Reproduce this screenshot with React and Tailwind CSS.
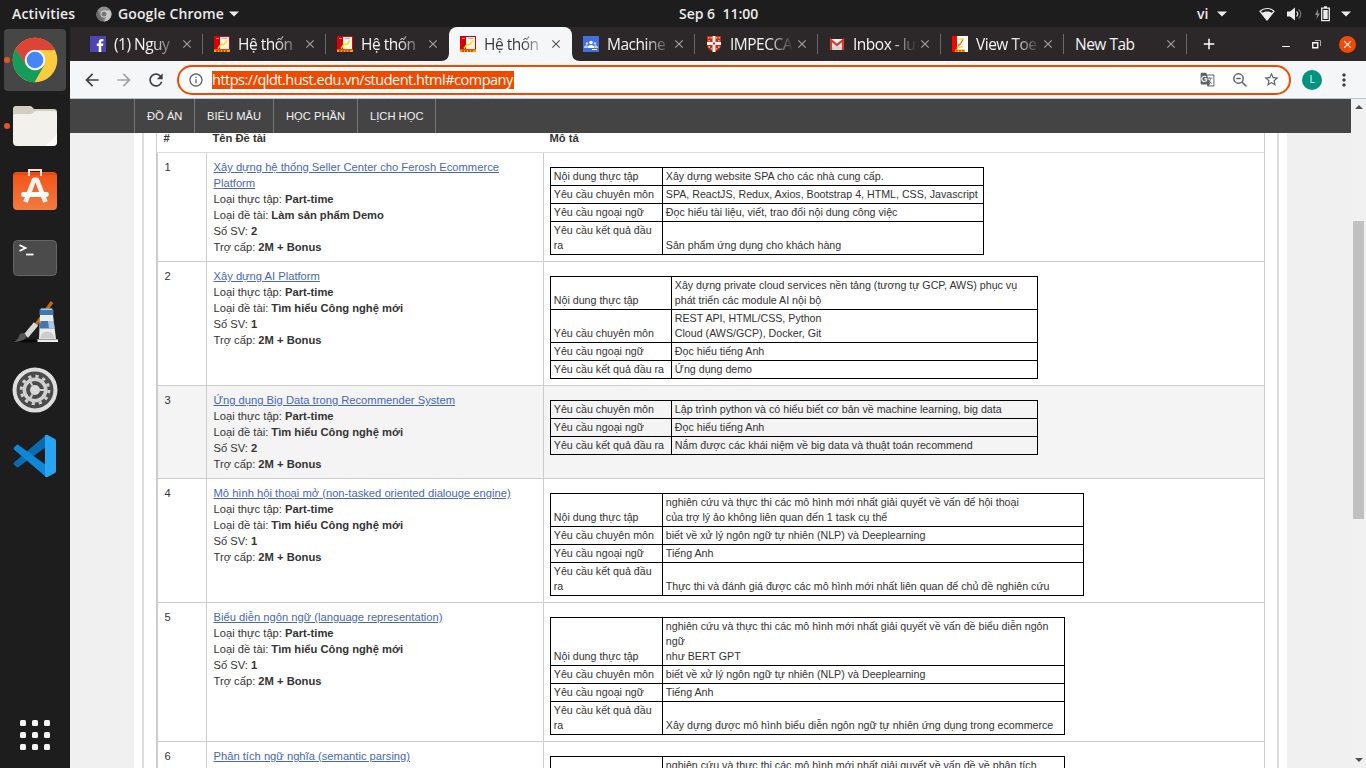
import React from "react";
import { MdArrowBack, MdArrowForward, MdRefresh, MdInfoOutline, MdGTranslate, MdStarBorder, MdClose, MdAdd, MdMoreVert } from "react-icons/md";

const UI = "font-['Open_Sans','Noto_Sans',sans-serif]";

const Hust = () => (
  <svg width="16" height="16" viewBox="0 0 16 16">
    <path fill="#d8000a" d="M0 0h16v16H0z" />
    <path fill="#fff6ee" d="M6 1h9v12H6z" />
    <path fill="#f0a400" d="M0 13.5h16V16H0z" />
    <path d="M4 12.500 7 8.500h3l3-4" stroke="#f2e400" strokeWidth="1.400" fill="none" />
    <path d="M2 2.500h3" stroke="#f0a000" />
    <path d="M8 2.500h5" stroke="#f2a0a0" />
    <path d="M2 15h12" stroke="#c8000a" strokeDasharray="2 1" />
  </svg>
);
const Facebook = () => (
  <svg width="16" height="16" viewBox="0 0 16 16">
    <path fill="#4c46b2" d="M0 0h16v16H0z" />
    <path fill="#fff" d="M8.700 16V10H6.800V7.600h1.900V6c0-2 1.200-3 3-3h1.700v2.300h-1.100c-.9 0-1.100.4-1.100 1.100v1.200h2.200L13 10h-1.800v6z" />
  </svg>
);
const Classroom = () => (
  <svg width="16" height="16" viewBox="0 0 16 16">
    <path fill="#4470dc" d="M0 0h16v16H0z" />
    <g fill="#c2d2f6"><circle cx="4" cy="7.500" r="1.300" /><circle cx="12" cy="7.500" r="1.300" /><path d="M1 12c0-3 3-3.500 4-2l-1 2zM15 12c0-3-3-3.500-4-2l1 2z" /></g>
    <g fill="#fff"><circle cx="8" cy="6.500" r="1.800" /><path d="M4.500 12c0-4 7-4 7 0z" /><path d="M9 13h5v1H9z" /></g>
  </svg>
);
const Crest = () => (
  <svg width="16" height="16" viewBox="0 0 16 16">
    <path fill="#c9281e" d="M1 0h14v9c0 4-4 6-7 7-3-1-7-3-7-7z" />
    <path fill="#e9b33c" d="M2 1h1.500v1.500H2zM4.500 1H6v1.500H4.500zM10 1h1.500v1.500H10zM12.500 1H14v1.500h-1.500zM2.500 4H4v1.500H2.500zM12 4h1.500v1.500H12zM2.500 10H4v2H2.500zM12 10h1.500v2H12zM4.800 12H6v1.500H4.800zM10 12h1.200v1.500H10z" />
    <path d="M8 0v16M1 7.500h14" stroke="#f4f4f4" strokeWidth="3" />
    <path fill="#c9281e" d="M7 6.500h2v2H7z" />
  </svg>
);
const Gmail = () => (
  <svg width="16" height="16" viewBox="0 0 16 16">
    <path fill="#f0f0f0" d="M1 3h14v11H1z" />
    <path fill="#d6d6d6" d="m5 9 3 2 3-2 3 5H2z" />
    <path d="M2 14V4l6 5 6-5v10" stroke="#d9372b" strokeWidth="2.200" fill="none" />
  </svg>
);
const ViewToeic = () => (
  <svg width="16" height="16" viewBox="0 0 16 16">
    <path fill="#fff" d="M0 0h16v16H0z" />
    <path fill="#f00" d="M0 0h5v16H0z" />
    <path fill="#f4c400" d="M3 13.500h10V16H3z" />
    <path d="M5 12 11 3M6 3h6M5 11h6" stroke="#e8c800" strokeWidth="1.200" fill="none" />
    <path d="M6 9h2l3-5" stroke="#e23020" fill="none" strokeWidth=".8" />
    <path d="M4 14.800h8" stroke="#f00" strokeDasharray="2 1" />
  </svg>
);

const tabs = [
  { t: "(1) Nguy", I: Facebook },
  { t: "Hệ thốn", I: Hust },
  { t: "Hệ thốn", I: Hust, noSep: true },
  { t: "Hệ thốn", I: Hust, active: true },
  { t: "Machine", I: Classroom },
  { t: "IMPECCA", I: Crest },
  { t: "Inbox - lu", I: Gmail },
  { t: "View Toe", I: ViewToeic },
  { t: "New Tab" },
];

function Tab({ t, I, active, noSep, first }) {
  const mask = I ? "[mask-image:linear-gradient(to_right,#000_38px,transparent_64px)]" : "";
  return (
    <div className={"relative flex h-[34px] w-[123px] shrink-0 items-center pl-[11px] " + (active ? "rounded-t-[8px] bg-[#f5f6f8] text-[#3b3b3b]" : "text-[#f4f4f4]")}>
      {active && (
        <svg className="absolute -left-[8px] bottom-0" width="139" height="8" viewBox="0 0 139 8">
          <path fill="#f5f6f8" d="M0 8C5 8 8 5 8 0v8zM139 8c-5 0-8-3-8-8v8z" />
        </svg>
      )}
      {I && <div className={"h-4 w-4 shrink-0 " + (first ? "-ml-px mr-[8px]" : "mr-[8px]")}><I /></div>}
      <div className={"whitespace-nowrap text-[15.5px] leading-[24px] tracking-[-0.5px] " + (I ? "w-[64px] " : "w-[88px] ") + mask}>{t}</div>
      <MdClose className={"h-[14px] w-[14px] shrink-0 " + (first ? "ml-[2px] " : "ml-px ") + (active ? "text-[#555]" : "text-[#a0a0a0]")} />
      {!active && !noSep && <div className="ml-auto h-[20px] w-px bg-[#6a6a6a]" />}
    </div>
  );
}

const Down = ({ className }) => (
  <svg className={className} width="10" height="6" viewBox="0 0 10 6"><path fill="#ececec" d="M0 .5h10L5 5.500z" /></svg>
);

function TopBar() {
  return (
    <div className={"flex h-[27px] shrink-0 items-center bg-[#1d1d1d] text-[14px] font-semibold leading-[26px] text-[#ececec] " + UI}>
      <div className="w-[96px] whitespace-nowrap pl-3 tracking-[0.2px]">Activities</div>
      <svg width="16" height="16" viewBox="0 0 16 16">
        <circle cx="8" cy="8" r="7.500" fill="#8d8d8d" /><path fill="#c6c6c6" d="M8 4.500h6.600A7.500 7.500 0 0 1 8 15.500L11 10z" /><path fill="#6d6d6d" d="M1.500 4.200 5 10l3 2-1.500 3.500C0 14-1 8 1.500 4.200z" />
        <circle cx="8" cy="8" r="3.500" fill="#ddd" /><circle cx="8" cy="8" r="2.600" fill="#777" />
      </svg>
      <div className="ml-[6px] w-[108px] whitespace-nowrap tracking-[0.12px]">Google Chrome</div>
      <Down className="ml-[3px]" />
      <div className="ml-[440px] w-[81px] whitespace-pre">Sep 6  11:00</div>
      <div className="ml-[437px] w-[12px]">vi</div>
      <Down className="ml-[8px]" />
      <svg className="ml-[32px]" width="16" height="14" viewBox="0 0 16 14"><path fill="#ececec" d="M8 13.500 2.500 6.300C5.500 4 10.500 4 13.500 6.300z" /><path d="M1 4.200C5 .6 11 .6 15 4.200L8 13z" stroke="#ececec" strokeWidth="1.200" fill="none" /></svg>
      <svg className="ml-[12px]" width="16" height="14" viewBox="0 0 16 14"><path fill="#ececec" d="M0 4.500h3L8 .5v13L3 9.500H0z" /><path d="M9.500 4.500c1.500 1.500 1.500 3.500 0 5" stroke="#ddd" fill="none" strokeWidth="1.200" /><path d="M11.500 2.500c3 2.500 3 6.500 0 9" stroke="#777" fill="none" strokeWidth="1.200" /></svg>
      <svg className="ml-[12px]" width="16" height="16" viewBox="0 0 16 16"><path fill="#888" d="M3 3 0 9h2l-.5 4L5 7.500H3z" /><path d="M6.700 2.200h7.600v12.500H6.700zM9 .8h3" stroke="#ececec" strokeWidth="1.300" fill="none" /><path fill="#ececec" d="M8.300 4h4.400v9H8.300z" /></svg>
      <Down className="ml-[10px]" />
    </div>
  );
}

function Dock() {
  const cell = "relative flex h-[66px] w-[70px] shrink-0 items-center justify-center";
  return (
    <div className="flex w-[70px] shrink-0 flex-col bg-[#1d1d1d]">
      <div className={cell}>
        <div className="flex h-[62px] w-[62px] items-center justify-center rounded-[4px] bg-[#464646]">
          <svg width="46" height="46" viewBox="0 0 46 46">
            <circle cx="23" cy="23" r="22.300" fill="#fccb3f" />
            <path fill="#dc4437" d="M3.500 12A22.300 22.300 0 0 1 43 13H23L13.500 28z" />
            <path fill="#149c58" d="M3.700 12A22.300 22.300 0 0 0 22.500 45.300L32 28.500 23 33l-9-5z" />
            <circle cx="23" cy="23" r="10.300" fill="#f3f3f3" /><circle cx="23" cy="23" r="8.300" fill="#4387f6" />
          </svg>
        </div>
        <div className="absolute left-[4px] top-[30px] h-[6px] w-[6px] rounded-full bg-[#e95420]" />
      </div>
      <div className={cell}>
        <svg width="46" height="44" viewBox="0 0 46 44">
          <path fill="#d3cfc0" d="M1 5q0-3 3-3h14q2 0 3 2l1 1h20q3 0 3 3v8H1z" />
          <path fill="#f3f1ec" d="M1 12q0-2 3-2h14q2 0 4-2 1-1 3-1h17q3 0 3 3v28q0 4-4 4H5q-4 0-4-4z" />
          <path fill="#fff" opacity=".8" d="M45 30v8q0 4-4 4h-7z" />
        </svg>
        <div className="absolute left-[4px] top-[30px] h-[6px] w-[6px] rounded-full bg-[#e95420]" />
      </div>
      <div className={cell}>
        <svg className="-mt-[4px]" width="46" height="44" viewBox="0 0 46 44">
          <defs><linearGradient id="sw" x2="0" y2="1"><stop stopColor="#f35217" /><stop offset="1" stopColor="#f17c41" /></linearGradient></defs>
          <rect x="1" y="4" width="44" height="38" rx="4" fill="url(#sw)" />
          <path d="M1.500 6h43" stroke="#cf4514" /><path d="M17 8V2h12v6" stroke="#f8ded4" strokeWidth="2" fill="none" />
          <path d="M13.500 34 22 12h3l8.500 22" stroke="#fff2ec" strokeWidth="4.800" fill="none" strokeLinejoin="round" />
          <path d="M11.500 26.500h23" stroke="#fff" strokeWidth="4.800" strokeLinecap="round" />
        </svg>
      </div>
      <div className={cell}>
        <svg className="-mt-px" width="46" height="38" viewBox="0 0 46 38">
          <rect x="1.500" y="1.500" width="43" height="35" rx="4" fill="#4b4b4b" stroke="#666" />
          <path d="m7.500 6 6 3-6 3" stroke="#fff" strokeWidth="1.800" fill="none" /><path d="M14 15.500h7.500" stroke="#fff" strokeWidth="1.800" />
        </svg>
      </div>
      <div className={cell}>
        <svg className="-mt-[4px]" width="46" height="44" viewBox="0 0 46 44">
          <ellipse cx="16" cy="41" rx="15" ry="1.500" fill="#080808" />
          <path d="M40 2 21 29" stroke="#c06a12" strokeWidth="3.200" />
          <path d="M24 24 14 36" stroke="#d8d8d8" strokeWidth="5.500" />
          <path fill="#565656" d="M11 33q4 1 3 5-4 4-13 4 5-2 6-6 1-3 4-3z" />
          <path fill="#ececec" d="M28 15h13l3 24h2v3H25.500v-3H27z" />
          <path fill="#4577ad" d="M29 8.500h11q1.500 0 1.500 2V15h-14v-4.500q0-2 1.500-2zM28.500 21h13l1 7.500h-15z" />
          <path fill="#a9c8e8" d="M36 21h5.500l1 7.500H37zM29 8.500h11V10H29z" />
          <path fill="#cdcdcd" d="M28 38.500q1-7 7-7t8 7z" /><path d="M25.500 39.500H46" stroke="#999" />
        </svg>
      </div>
      <div className={cell}>
        <svg width="46" height="46" viewBox="0 0 46 46">
          <circle cx="23" cy="23" r="20.500" fill="#4b4b4b" stroke="#dedede" strokeWidth="4" />
          <circle cx="23" cy="23" r="13.800" fill="none" stroke="#d0d0d0" strokeWidth="3" strokeDasharray="3.200 4.025" />
          <circle cx="23" cy="23" r="10.700" fill="none" stroke="#d0d0d0" strokeWidth="3.600" />
          <circle cx="23" cy="23" r="5" fill="#dadada" />
          <path d="M28 23h5M20.500 18.700 17.500 13.500M20.500 27.300 17.500 32.500" stroke="#d0d0d0" strokeWidth="2" />
        </svg>
      </div>
      <div className={cell}>
        <svg width="44" height="44" viewBox="0 0 44 44">
          <path fill="#0a6cb0" d="M33 1v12L5.500 33q-1 .8-2 0L1 30.500q-1-1 0-2z" />
          <path fill="#0f86d6" d="M33 43V31L5.500 11q-1-.8-2 0L1 13.500q-1 1 0 2z" />
          <path fill="#27a5f3" d="M32 1.500q1-1.200 2.500-.5l7.500 4q1 .6 1 2v30q0 1.400-1 2l-7.500 4q-1.500.7-2.500-.5z" />
        </svg>
      </div>
      <div className="mb-[18px] ml-[20px] mt-auto grid w-[30px] grid-cols-3 gap-[6px]">
        {Array.from({ length: 9 }, (_, i) => <div key={i} className="h-[6px] w-[6px] rounded-[1.5px] bg-[#f5f5f5]" />)}
      </div>
    </div>
  );
}

const ND = "Nội dung thực tập", CM = "Yêu cầu chuyên môn", NN = "Yêu cầu ngoại ngữ", KQ = "Yêu cầu kết quả đầu ra", KQ2 = "Yêu cầu kết quả đầu\nra";
const NEW = "Tìm hiểu Công nghệ mới";
const rows = [
  { title: "Xây dựng hệ thống Seller Center cho Ferosh Ecommerce\nPlatform", kind: "Làm sản phẩm Demo", n: 2, w: "w-[434px]", c: "w-[112px]",
    d: [[ND, "Xây dựng website SPA cho các nhà cung cấp."], [CM, "SPA, ReactJS, Redux, Axios, Bootstrap 4, HTML, CSS, Javascript"], [NN, "Đọc hiểu tài liệu, viết, trao đổi nội dung công việc"], [KQ2, "Sản phẩm ứng dụng cho khách hàng"]] },
  { title: "Xây dựng AI Platform", kind: NEW, n: 1, w: "w-[488px]", c: "w-[121px]",
    d: [[ND, "Xây dựng private cloud services nền tảng (tương tự GCP, AWS) phục vụ\nphát triển các module AI nội bộ"], [CM, "REST API, HTML/CSS, Python\nCloud (AWS/GCP), Docker, Git"], [NN, "Đọc hiểu tiếng Anh"], [KQ, "Ứng dụng demo"]] },
  { title: "Ứng dụng Big Data trong Recommender System", kind: NEW, n: 2, w: "w-[488px]", c: "w-[121px]", hl: true,
    d: [[CM, "Lập trình python và có hiểu biết cơ bản về machine learning, big data"], [NN, "Đọc hiểu tiếng Anh"], [KQ, "Nắm được các khái niệm về big data và thuật toán recommend"]] },
  { title: "Mô hình hội thoại mở (non-tasked oriented dialouge engine)", kind: NEW, n: 1, w: "w-[534px]", c: "w-[112px]",
    d: [[ND, "nghiên cứu và thực thi các mô hình mới nhất giải quyết về vấn để hội thoại\ncủa trợ lý ảo không liên quan đến 1 task cụ thể"], [CM, "biết về xử lý ngôn ngữ tự nhiên (NLP) và Deeplearning"], [NN, "Tiếng Anh"], [KQ2, "Thực thi và đánh giá được các mô hình mới nhất liên quan để chủ đề nghiên cứu"]] },
  { title: "Biểu diễn ngôn ngữ (language representation)", kind: NEW, n: 1, w: "w-[515px]", c: "w-[112px]",
    d: [[ND, "nghiên cứu và thực thi các mô hình mới nhất giải quyết về vấn đề biểu diễn ngôn\nngữ\nnhư BERT GPT"], [CM, "biết về xử lý ngôn ngữ tự nhiên (NLP) và Deeplearning"], [NN, "Tiếng Anh"], [KQ2, "Xây dựng được mô hình biểu diễn ngôn ngữ tự nhiên ứng dụng trong ecommerce"]] },
  { title: "Phân tích ngữ nghĩa (semantic parsing)", n: 1, w: "w-[515px]", c: "w-[112px]",
    d: [["", "nghiên cứu và thực thi các mô hình mới nhất giải quyết về vấn đề về phân tích"]] },
];

function Row({ r, i }) {
  return (
    <div className={"flex border-b border-l-2 border-r border-[#ccc] " + (r.hl ? "bg-[#f4f4f4]" : "")}>
      <div className="w-[49px] shrink-0 border-r border-[#ccc] pl-[6.5px] pt-[6px]">{i + 1}</div>
      <div className="w-[337px] shrink-0 whitespace-pre border-r border-[#ccc] py-[6px] pl-[6.5px]">
        <div className="text-[#4767bb] underline">{r.title}</div>
        {r.kind && (
          <>
            <div>Loại thực tập: <b>Part-time</b></div>
            <div>Loại đề tài: <b>{r.kind}</b></div>
            <div>Số SV: <b>{r.n}</b></div>
            <div>Trợ cấp: <b>2M + Bonus</b></div>
          </>
        )}
      </div>
      <div className="pb-[6px] pl-[6px] pt-[14px]">
        <table className={"table-fixed border-collapse text-[10.67px] leading-[15px] " + r.w}>
          <tbody>
            {r.d.map(([a, b], k) => (
              <tr key={k}>
                <td className={"whitespace-pre border border-black px-[2.8px] py-px align-bottom " + r.c}>{a}</td>
                <td className="whitespace-pre border border-black px-[2.8px] py-px align-bottom">{b}</td>
              </tr>
            ))}
          </tbody>
        </table>
      </div>
    </div>
  );
}

function Page() {
  const item = "flex items-center border-r border-[#777] pl-[12px]";
  return (
    <div className="flex min-h-0 flex-1 bg-[#f0f0f0] font-['Liberation_Sans',Arial,sans-serif] text-[11.2px] leading-[16px] text-[#333]">
      <div className="flex w-[1281px] flex-col overflow-hidden">
        <div className="flex h-[34px] shrink-0 bg-[#444] pl-[64px] text-[11.2px] text-[#f2f2f2]">
          <div className={item + " w-[61px] border-l"}>ĐỒ ÁN</div>
          <div className={item + " w-[79px]"}>BIỂU MẪU</div>
          <div className={item + " w-[84px]"}>HỌC PHẦN</div>
          <div className={item + " w-[78px]"}>LỊCH HỌC</div>
        </div>
        <div className="ml-[64px] flex min-h-0 w-[1153px] flex-1 bg-white px-[8px]">
          <div className="w-full overflow-hidden border-x-2 border-[#ddd] px-[12px]">
            <div className="-mt-[3px] flex h-[23px] border-b border-l border-r border-[#ccc] border-b-[#ddd] font-bold">
              <div className="w-[49px] pl-[6.5px]">#</div>
              <div className="w-[337px] pl-[6.5px]">Tên Đề tài</div>
              <div className="pl-[6.5px]">Mô tả</div>
            </div>
            {rows.map((r, i) => <Row key={i} r={r} i={i} />)}
          </div>
        </div>
      </div>
      <div className="flex w-[15px] shrink-0 flex-col items-center bg-[#f1f1f1]">
        <svg className="mt-[6px]" width="8" height="4" viewBox="0 0 8 4"><path fill="#505050" d="M0 4h8L4 0z" /></svg>
        <div className="mt-[112px] h-[298px] w-[11px] bg-[#c1c1c1]" />
        <svg className="mb-[6px] mt-auto" width="8" height="4" viewBox="0 0 8 4"><path fill="#505050" d="M0 0h8L4 4z" /></svg>
      </div>
    </div>
  );
}

export default function App() {
  return (
    <div className="flex h-[768px] w-[1366px] flex-col overflow-hidden">
      <TopBar />
      <div className="flex min-h-0 flex-1">
        <Dock />
        <div className="flex min-w-0 flex-1 flex-col">
          <div className={"flex h-[34px] shrink-0 items-center bg-[#2c2829] pl-[10px] " + UI}>
            {tabs.map((t, i) => <Tab key={i} {...t} first={i === 0} />)}
            <MdAdd className="ml-[13px] h-[18px] w-[18px] text-white" />
            <div className="ml-[64px] mt-[5px] h-px w-[8px] bg-white" />
            <svg className="ml-[22px]" width="9" height="9" viewBox="0 0 9 9"><path d="M.75 2.750h5v5h-5z" stroke="#fff" strokeWidth="1.300" fill="none" /><path d="M3 .5h5.500V6" stroke="#aaa" fill="none" /></svg>
            <div className="ml-[18px] flex h-[17px] w-[17px] items-center justify-center rounded-full bg-[#f04a05] text-white"><MdClose className="h-[13px] w-[13px]" /></div>
          </div>
          <div className={"flex h-[38px] shrink-0 items-center border-b border-[#bcc4cc] bg-[#f5f6f8] pl-[12px] " + UI}>
            <MdArrowBack className="h-5 w-5 text-[#3c4043]" />
            <MdArrowForward className="ml-[12px] h-5 w-5 text-[#a0a3a6]" />
            <MdRefresh className="ml-[12px] h-5 w-5 text-[#3c4043]" />
            <div className="ml-[11px] flex h-[30px] w-[1114px] items-center rounded-full border-2 border-[#f04a00] bg-white pl-[9px] text-[#5f6368]">
              <MdInfoOutline className="h-4 w-4" />
              <div className="ml-[8px] h-[18px] w-[302px] whitespace-nowrap bg-[#f04a00] text-[14.5px] leading-[17px] tracking-[-0.5px] text-white">https://qldt.hust.edu.vn/student.html#company</div>
              <MdGTranslate className="ml-[686px] h-[15px] w-[15px]" />
              <svg className="ml-[17px]" width="16" height="16" viewBox="0 0 16 16" fill="none" stroke="#5f6368" strokeWidth="1.500"><circle cx="6.500" cy="6.500" r="4.700" /><path d="m10 10 4.500 4.500M4.300 6.500h4.400" /></svg>
              <MdStarBorder className="ml-[15px] h-[17px] w-[17px]" />
            </div>
            <div className="ml-[11px] flex h-5 w-5 items-center justify-center rounded-full bg-[#009480] text-[10px] text-white">L</div>
            <MdMoreVert className="ml-[12px] h-5 w-5 text-[#3c4043]" />
          </div>
          <Page />
        </div>
      </div>
    </div>
  );
}
